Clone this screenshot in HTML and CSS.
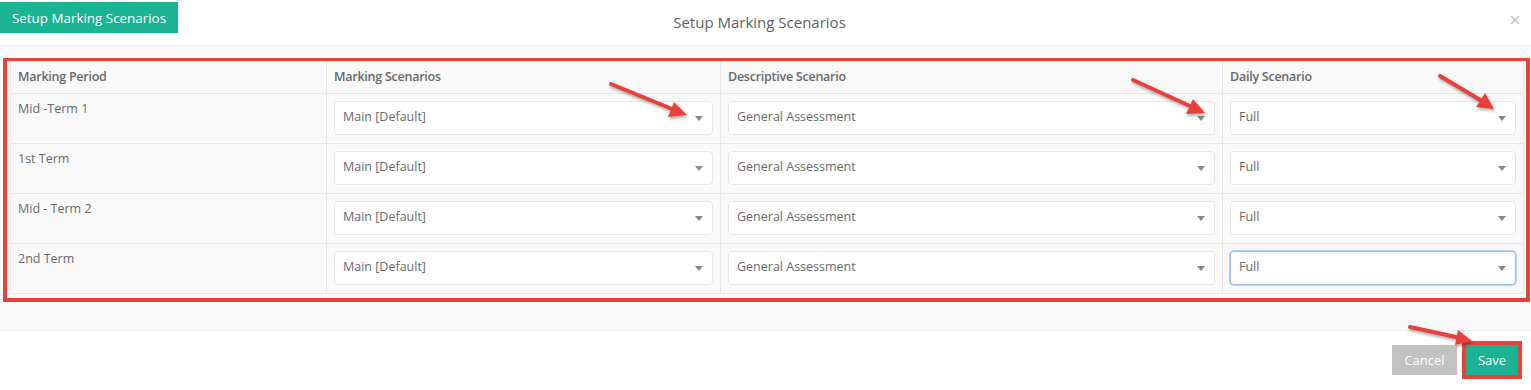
FILE: index.html
```html
<!DOCTYPE html>
<html>
<head>
<meta charset="utf-8">
<link rel="stylesheet" href="styles.css">
</head>
<body>
<div class="page">
  <button class="launch">Setup Marking Scenarios</button>
  <div class="modal-header">
    <h4 class="title">Setup Marking Scenarios</h4>
    <span class="close"><svg width="10" height="10" viewBox="0 0 10 10"><path d="M1 1L9 9M9 1L1 9" stroke="#c4c4c4" stroke-width="1.6"/></svg></span>
  </div>
  <div class="modal-body">
    <div class="highlight">
      <table class="grid">
        <colgroup><col class="c1"><col class="c2"><col class="c3"><col class="c4"></colgroup>
        <thead>
          <tr><th>Marking Period</th><th>Marking Scenarios</th><th>Descriptive Scenario</th><th>Daily Scenario</th></tr>
        </thead>
        <tbody>
          <tr><td>Mid -Term 1</td><td><div class="select">Main [Default]<i class="caret"></i></div></td><td><div class="select">General Assessment<i class="caret"></i></div></td><td><div class="select">Full<i class="caret"></i></div></td></tr>
          <tr><td>1st Term</td><td><div class="select">Main [Default]<i class="caret"></i></div></td><td><div class="select">General Assessment<i class="caret"></i></div></td><td><div class="select">Full<i class="caret"></i></div></td></tr>
          <tr><td>Mid - Term 2</td><td><div class="select">Main [Default]<i class="caret"></i></div></td><td><div class="select">General Assessment<i class="caret"></i></div></td><td><div class="select">Full<i class="caret"></i></div></td></tr>
          <tr><td>2nd Term</td><td><div class="select">Main [Default]<i class="caret"></i></div></td><td><div class="select">General Assessment<i class="caret"></i></div></td><td><div class="select focused">Full<i class="caret"></i></div></td></tr>
        </tbody>
      </table>
    </div>
  </div>
  <div class="modal-footer">
    <button class="btn cancel">Cancel</button>
    <button class="btn save">Save</button>
  </div>
  <svg class="arrows" width="1531" height="390" viewBox="0 0 1531 390">
    <defs>
      <filter id="sh" x="-20%" y="-50%" width="140%" height="200%">
        <feDropShadow dx="1" dy="2" stdDeviation="1.5" flood-color="#000" flood-opacity="0.35"/>
      </filter>
    </defs>
    <g fill="#e8413b" stroke="#e8413b" filter="url(#sh)">
      <line x1="611" y1="84" x2="672" y2="109" stroke-width="4" stroke-linecap="round"/>
      <polygon points="687,115 668,117 674,102" stroke="none"/>
      <line x1="1133" y1="80" x2="1190" y2="106" stroke-width="4" stroke-linecap="round"/>
      <polygon points="1205,113 1186,114 1193,99" stroke="none"/>
      <line x1="1440" y1="76" x2="1482" y2="101" stroke-width="4" stroke-linecap="round"/>
      <polygon points="1494,109 1476,107 1485,93" stroke="none"/>
      <line x1="1410" y1="327" x2="1456" y2="337" stroke-width="4" stroke-linecap="round"/>
      <polygon points="1472,341 1455,345 1458,330" stroke="none"/>
    </g>
  </svg>
</div>
</body>
</html>
```

FILE: styles.css
```css
* { box-sizing: border-box; }
html, body { margin: 0; padding: 0; background: #fff; }
body {
  font-family: "Open Sans", "DejaVu Sans", sans-serif;
  font-size: 12.5px;
  color: #676a6c;
}
.page { position: relative; width: 1531px; height: 390px; overflow: hidden; }

.launch {
  position: absolute;
  left: 0;
  top: 2px;
  width: 178px;
  height: 31px;
  border: 0;
  background: #1ab394;
  color: #fff;
  font-family: inherit;
  font-size: 13.4px;
  padding: 0;
  z-index: 2;
}

.modal-header {
  position: relative;
  height: 46px;
  border-bottom: 1px solid #ececec;
  display: flex;
  align-items: center;
  justify-content: center;
}
.title {
  margin: 0 12px 0 0;
  font-size: 15px;
  font-weight: 400;
  color: #5e6062;
  padding-bottom: 2px;
}
.close {
  position: absolute;
  right: 11px;
  top: 15px;
  line-height: 0;
}

.modal-body {
  background: #fafafa;
  padding: 12px 1px 29px 3px;
  height: 284px;
}
.highlight {
  border: 4px solid #e8413b;
  border-top-width: 3px;
  padding: 0 1px 4px 3px;
}
.grid {
  width: 1513px;
  border-collapse: collapse;
  table-layout: fixed;
  background: #f9f9f9;
}
.c1 { width: 316px; }
.c2 { width: 394px; }
.c3 { width: 502px; }
.c4 { width: 301px; }
.grid th, .grid td {
  border: 1px solid #e7e7e7;
  text-align: left;
  vertical-align: top;
}
.grid th {
  font-weight: 600;
  font-size: 12.5px;
  letter-spacing: -0.25px;
  height: 32px;
  padding: 6px 7px 0;
  color: #676a6c;
}
.grid td {
  height: 50px;
  padding: 6px 7px 7px 7px;
  line-height: 18px;
}
.grid td + td { padding: 7px 7px 7px 7px; }
.select {
  position: relative;
  height: 34px;
  background: #fff;
  border: 1px solid #e5e6e7;
  border-radius: 4px;
  padding: 6px 24px 0 8px;
  line-height: 18px;
  color: #676a6c;
}
.select.focused {
  border-color: #9fc2f6;
  box-shadow: 0 0 0 1px #b3cff7;
}
.caret {
  position: absolute;
  right: 9px;
  top: 14px;
  width: 0;
  height: 0;
  border-left: 4px solid transparent;
  border-right: 4px solid transparent;
  border-top: 5px solid #888;
}

.modal-footer {
  border-top: 1px solid #ececec;
  display: flex;
  justify-content: flex-end;
  gap: 9px;
  padding: 14px 13px 0 0;
}
.btn {
  height: 30px;
  border: 0;
  color: #fff;
  font-family: inherit;
  font-size: 13px;
  padding: 0;
}
.cancel { width: 65px; background: #c2c2c2; }
.save {
  width: 52px;
  background: #1ab394;
  outline: 4px solid #e8413b;
}

.arrows { position: absolute; left: 0; top: 0; pointer-events: none; z-index: 3; }
```
